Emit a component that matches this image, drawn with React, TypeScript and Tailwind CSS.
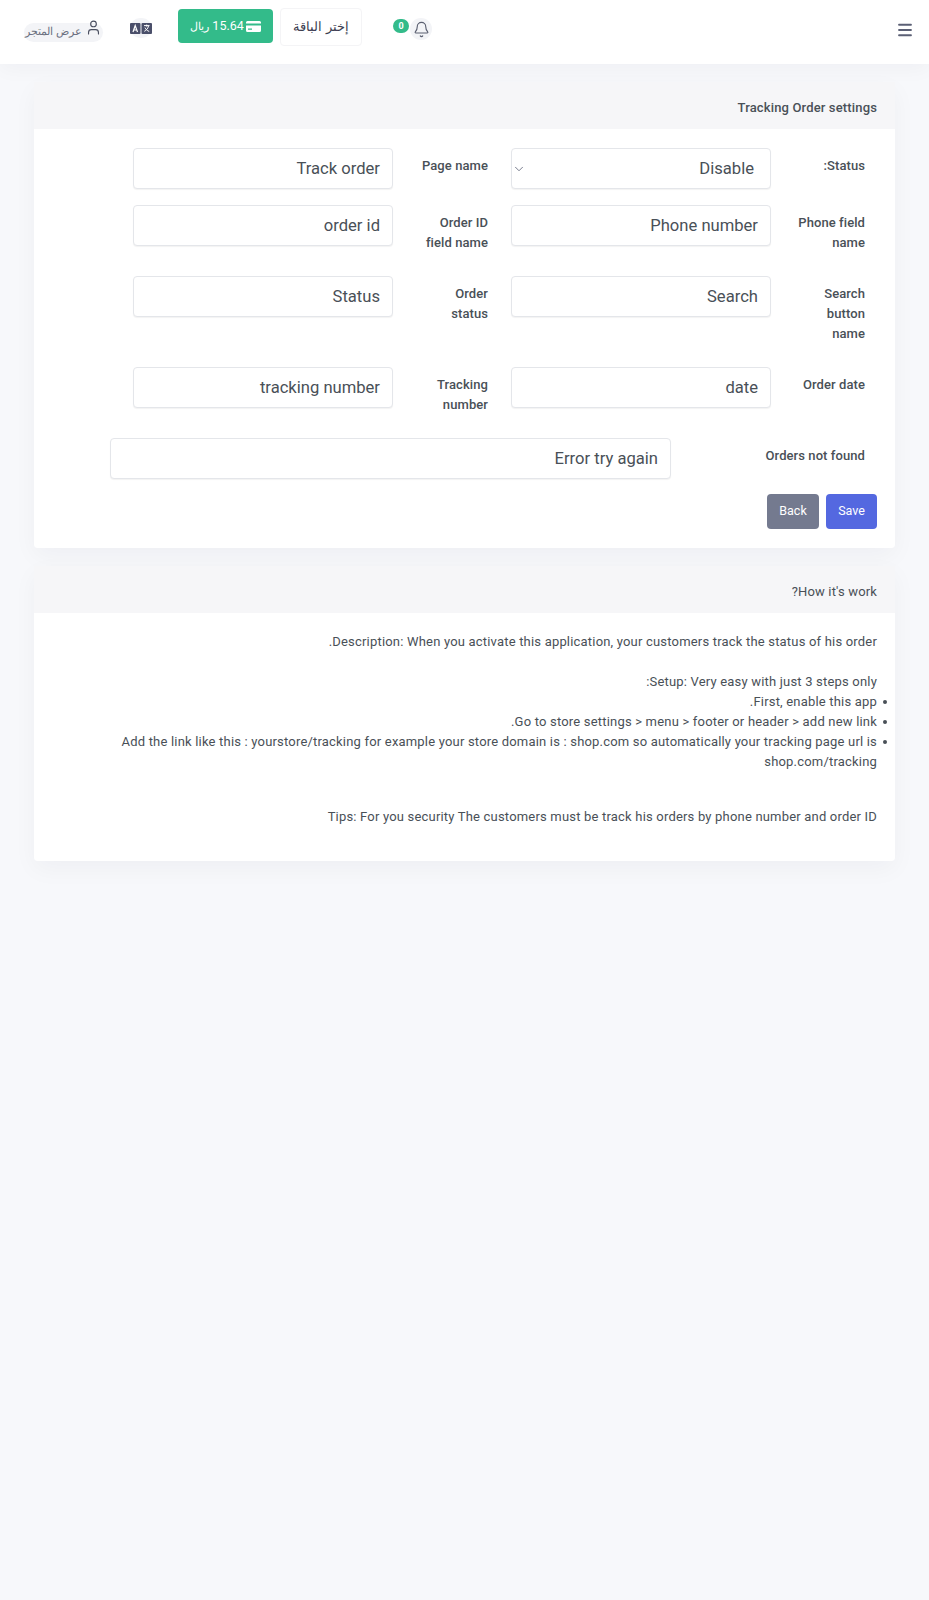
import { Bell, ChevronDown, Menu, User } from 'lucide-react';

const font = "font-['Roboto','Noto_Sans',sans-serif]";

function Label({ text, wide }: { text: string; wide?: boolean }) {
  return (
    <label className={`shrink-0 py-[7.5px] text-[13px] leading-5 font-[480] tracking-[0.08px] text-[#495057] ${wide ? 'w-[118px] pr-[23px] pl-[25px]' : 'w-[94px] pl-[24px]'}`}>
      {text}
    </label>
  );
}

function Field({ value }: { value: string }) {
  return (
    <div className="h-[41px] w-[260px] shrink-0 rounded border border-[#e4e6ea] bg-white px-3 text-[16.6px] leading-[40px] text-[#495057] shadow-[0_1px_1px_rgba(0,0,0,0.05)]">
      {value}
    </div>
  );
}

function SelectField({ value }: { value: string }) {
  return (
    <div className="flex h-[41px] w-[260px] shrink-0 items-center justify-between rounded border border-[#e4e6ea] bg-white pr-4 pl-0 text-[16.6px] text-[#495057] shadow-[0_1px_1px_rgba(0,0,0,0.05)]">
      <span className="mt-[1px]">{value}</span>
      <ChevronDown size={14} strokeWidth={1.4} className="text-[#5b6075]" />
    </div>
  );
}

function Translate() {
  return (
    <svg width="22" height="13" viewBox="0 0 22 13">
      <rect x="0" y="1" width="10.5" height="11" rx="1" fill="#4a4f6a" />
      <rect x="11.5" y="1" width="10.5" height="11" rx="1" fill="#4a4f6a" />
      <path d="M3 10 5.2 3.5 7.5 10M3.8 8h2.9" stroke="#fff" strokeWidth="1.2" fill="none" />
      <path d="M14 3.6h5.5M16.7 2.6v2M18.5 4c-.6 2.5-2 4.300-4.200 5.300M15 5.600c.8 1.800 2.200 3.200 4.200 3.800" stroke="#fff" strokeWidth="1" fill="none" />
    </svg>
  );
}

function Card() {
  return (
    <svg width="15" height="11" viewBox="0 0 15 11">
      <path d="M1.500 0h12A1.500 1.500 0 0 1 15 1.500V2.500H0V1.500A1.500 1.500 0 0 1 1.500 0zM0 4.500h15v5A1.500 1.500 0 0 1 13.500 11h-12A1.500 1.500 0 0 1 0 9.500zM2 7.500v1.200h4V7.500z" fill="#fff" fillRule="evenodd" />
    </svg>
  );
}

function Dot() {
  return <span className="absolute top-2 right-[-10px] h-1 w-1 rounded-full bg-[#495057]" />;
}

export default function App() {
  return (
    <div dir="rtl" className={`min-h-[1600px] bg-[#f7f8fb] ${font}`}>
      {/* Top bar */}
      <header className="flex h-16 items-center bg-white pr-[15px] pl-[24px] shadow-[0_4px_20px_rgba(20,30,60,0.04)]">
        <Menu size={18} strokeWidth={2.4} className="mt-[-4px] text-[#5b6075]" />
        <div className="mr-auto mb-[10px] flex items-center">
          <div className="relative mt-[4px] ml-[48px] flex h-[22px] w-[22px] items-center justify-center rounded-full bg-[#f3f4f7]">
            <Bell size={17} strokeWidth={1.6} className="text-[#5a5f70]" />
            <span className="absolute top-[1px] left-[-17px] h-[14px] w-[16px] rounded-full bg-[#33bb8a] text-center text-[9px] leading-[14px] font-bold text-white">0</span>
          </div>
          <button className="ml-[7px] h-[38px] w-[82px] rounded border border-[#f4f4f6] bg-white text-[13px] text-[#3c4050]">
            إختر الباقة
          </button>
          <div className="mb-[2px] ml-[26px] flex h-[34px] w-[95px] items-center justify-center gap-[2px] rounded bg-[#33bb8a] text-[12.5px] text-white">
            <Card />
            <span>15.64 <span className="text-[11px]">ريال</span></span>
          </div>
          <div className="mt-[2px] ml-[27px] flex h-[20px] w-[22px] items-center justify-center rounded-full bg-[#f3f4f7]">
            <Translate />
          </div>
          <div className="mt-[10px] flex h-[19px] w-[79px] items-center gap-[3px] rounded-full bg-[#f3f4f7] pr-[1px] text-[10.5px] whitespace-nowrap text-[#6b7080]">
            <User size={17} strokeWidth={1.6} className="mt-[-9px] shrink-0 text-[#4a4f60]" />
            <span>عرض المتجر</span>
          </div>
        </div>
      </header>

      <main className="px-[34px] pt-[18px]">
        {/* Settings card */}
        <section className="mb-[18px] rounded shadow-[0_8px_24px_rgba(20,30,60,0.04)]">
          <h2 className="flex h-[47px] items-center bg-[#f6f6f8] px-[18px] pt-[4px] text-[13px] font-[480] tracking-[0.15px] text-[#495057]">Tracking Order settings</h2>
          <div className="rounded-b bg-white px-[18px] pt-[19px] pb-[19px]">
            <div className="mb-4 flex items-start pr-[12px]">
              <Label text="Status:" />
              <SelectField value="Disable" />
              <Label text="Page name" wide />
              <Field value="Track order" />
            </div>
            <div className="mb-4 flex items-start pr-[12px]">
              <Label text="Phone field name" />
              <Field value="Phone number" />
              <Label text="Order ID field name" wide />
              <Field value="order id" />
            </div>
            <div className="mb-4 flex items-start pr-[12px]">
              <Label text="Search button name" />
              <Field value="Search" />
              <Label text="Order status" wide />
              <Field value="Status" />
            </div>
            <div className="mb-4 flex items-start pr-[12px]">
              <Label text="Order date" />
              <Field value="date" />
              <Label text="Tracking number" wide />
              <Field value="tracking number" />
            </div>
            <div className="mb-[15px] flex items-start pr-[12px]">
              <label className="w-[194px] shrink-0 py-[7.5px] text-[13px] leading-5 font-[480] tracking-[0.08px] text-[#495057]">Orders not found</label>
              <div className="h-[41px] w-[561px] rounded border border-[#e4e6ea] bg-white px-3 text-[16.6px] leading-[40px] text-[#495057] shadow-[0_1px_1px_rgba(0,0,0,0.05)]">Error try again</div>
            </div>
            <div className="flex gap-[7px]">
              <button className="h-[35px] w-[51px] rounded bg-[#5468e0] text-[12.5px] font-[450] text-white">Save</button>
              <button className="h-[35px] w-[52px] rounded bg-[#747a8f] text-[12.5px] font-[450] text-white">Back</button>
            </div>
          </div>
        </section>

        {/* Help card */}
        <section className="rounded shadow-[0_8px_24px_rgba(20,30,60,0.04)]">
          <h2 className="flex h-[47px] items-center bg-[#f6f6f8] px-[18px] pt-[4px] text-[13px] font-[450] tracking-[0.15px] text-[#495057]">How it's work?</h2>
          <div className="rounded-b bg-white px-[18px] pt-[19px] pb-[34px] text-[13px] leading-5 font-[450] tracking-[0.19px] text-[#495057]">
            <p className="mb-5">Description: When you activate this application, your customers track the status of his order.</p>
            <p>Setup: Very easy with just 3 steps only:</p>
            <ul>
              <li className="relative">
                <Dot />
                First, enable this app.
              </li>
              <li className="relative">
                <Dot />
                Go to store settings &gt; menu &gt; footer or header &gt; add new link.
              </li>
              <li className="relative">
                <Dot />
                Add the link like this : yourstore/tracking for example your store domain is : shop.com so automatically your tracking page url is shop.com/tracking
              </li>
            </ul>
            <p className="mt-[35px]">Tips: For you security The customers must be track his orders by phone number and order ID</p>
          </div>
        </section>
      </main>
    </div>
  );
}
